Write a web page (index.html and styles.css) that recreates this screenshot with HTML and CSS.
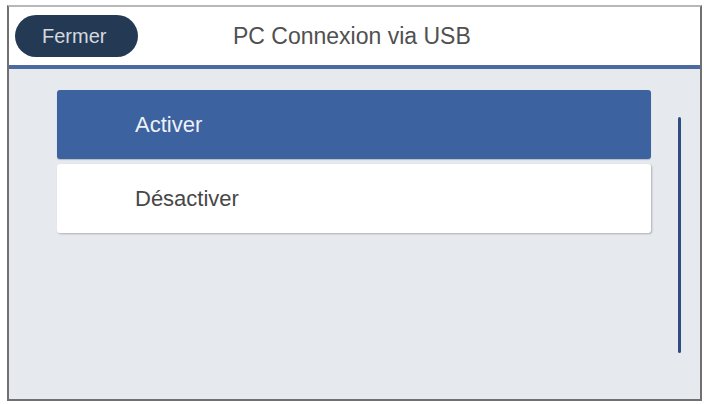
FILE: index.html
```html
<!DOCTYPE html>
<html lang="fr">
<head>
<meta charset="utf-8">
<link rel="stylesheet" href="styles.css">
</head>
<body>
<div class="frame">
  <div class="header">
    <div class="pill">Fermer</div>
    <div class="title">PC Connexion via USB</div>
  </div>
  <div class="content">
    <div class="list">
      <div class="row row-active">Activer</div>
      <div class="row">Désactiver</div>
    </div>
    <div class="scrollbar"></div>
  </div>
</div>
</body>
</html>
```
FILE: styles.css
```css
html, body {
  margin: 0;
  padding: 0;
  background: #ffffff;
}
body {
  font-family: "Liberation Sans", Arial, sans-serif;
}
.frame {
  box-sizing: border-box;
  margin: 5px 0 0 7px;
  width: 695px;
  height: 396px;
  border: 2px solid #707070;
  border-top-color: #b8b8b8;
  display: flex;
  flex-direction: column;
  background: #e6e9ee;
}
.header {
  height: 58px;
  background: #ffffff;
  border-bottom: 4px solid #4a6aa0;
  display: flex;
  align-items: center;
  flex-shrink: 0;
}
.pill {
  box-sizing: border-box;
  margin-left: 6px;
  width: 123px;
  height: 42px;
  border-radius: 21px;
  background: #243a54;
  color: #d4d9df;
  font-size: 20px;
  display: flex;
  align-items: center;
  padding-left: 27px;
}
.title {
  margin-left: 95px;
  font-size: 23px;
  color: #505050;
}
.content {
  flex: 1;
  display: flex;
  align-items: flex-start;
}
.list {
  margin: 21px 0 0 48px;
  width: 594px;
  display: flex;
  flex-direction: column;
  gap: 5px;
}
.row {
  height: 69px;
  border-radius: 3px;
  background: #ffffff;
  box-shadow: 1px 1px 2px rgba(0, 0, 0, 0.25);
  display: flex;
  align-items: center;
  padding-left: 78px;
  font-size: 22px;
  color: #474747;
}
.row-active {
  background: #3c62a0;
  color: #eef1f6;
  box-shadow: 0 1px 1px rgba(0, 0, 0, 0.2);
}
.scrollbar {
  margin: 48px 0 0 27px;
  width: 3px;
  height: 236px;
  border-radius: 2px;
  background: #2f4d82;
}
```
